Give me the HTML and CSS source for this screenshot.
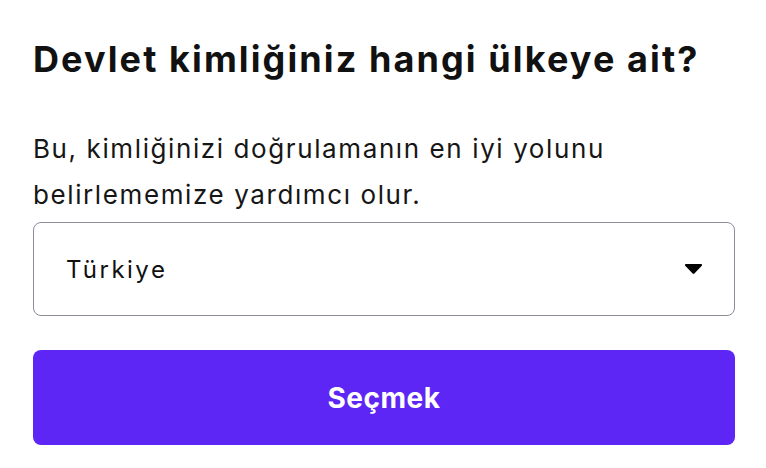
FILE: index.html
```html
<!DOCTYPE html>
<html lang="tr">
<head>
    <meta charset="UTF-8">
    <meta name="viewport" content="width=device-width, initial-scale=1.0">
    <title>Kimlik ülkesi</title>
    <link rel="stylesheet" href="styles.css">
</head>
<body>
    <div class="country-step">
        <h1>Devlet kimliğiniz hangi ülkeye ait?</h1>
        <p class="hint">Bu, kimliğinizi doğrulamanın en iyi yolunu belirlememize yardımcı olur.</p>

        <div class="select-box">
            <span class="select-value">Türkiye</span>
            <svg class="caret" width="19" height="10" viewBox="0 0 19 10">
                <path d="M1.2 1.8 Q0.2 0 2.2 0 H16.8 Q18.8 0 17.8 1.8 L10.6 9.2 Q9.5 10.2 8.4 9.2 Z" fill="#000"/>
            </svg>
        </div>

        <button class="submit">Seçmek</button>
    </div>
</body>
</html>
```

FILE: styles.css
```css
/* General Styling */
body, html {
    margin: 0;
    padding: 0;
    background: #fff;
    font-family: Inter, "Liberation Sans", Arial, sans-serif;
    color: #111;
}

.country-step {
    padding: 37px 31px 0 33px;
}

.country-step h1 {
    margin: 0;
    font-size: 36px;
    line-height: 44px;
    font-weight: bold;
    letter-spacing: 2.1px;
}

.hint {
    margin: 45px 0 0 0;
    font-size: 26px;
    line-height: 46px;
    letter-spacing: 1.6px;
    color: #161616;
}

/* Select */
.select-box {
    box-sizing: border-box;
    margin-top: 4px;
    height: 94px;
    border: 1.5px solid #8d8c99;
    border-radius: 8px;
    display: flex;
    align-items: center;
    justify-content: space-between;
    padding: 0 31px 0 32px;
}

.select-value {
    font-size: 24px;
    letter-spacing: 2.5px;
}

/* Button */
.submit {
    display: block;
    width: 100%;
    margin-top: 34px;
    height: 95px;
    border: none;
    border-radius: 8px;
    background: #5d26f5;
    color: #fff;
    font-family: inherit;
    font-size: 28px;
    font-weight: bold;
    letter-spacing: 0.5px;
}
```
